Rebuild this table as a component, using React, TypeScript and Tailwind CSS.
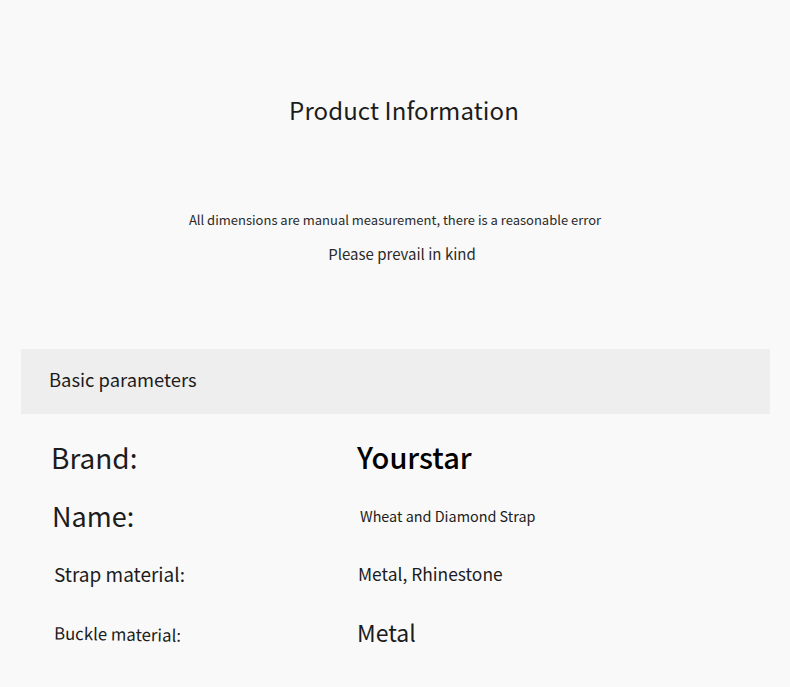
const font = { fontFamily: '"Noto Sans CJK SC", "Noto Sans", sans-serif' };

const rows = [
  { label: "Brand:", value: "Yourstar", h: "h-[60px]", lc: "text-[28px] pl-[30px]", vc: "text-[29px] font-medium text-black" },
  { label: "Name:", value: "Wheat and Diamond Strap", h: "h-[58px]", lc: "text-[27px] pl-[31px]", vc: "text-[14.4px] pl-[3px]" },
  { label: "Strap material:", value: "Metal, Rhinestone", h: "h-[58px]", lc: "text-[19px] pl-[33px]", vc: "text-[17.4px] pl-[1px]" },
  { label: "Buckle material:", value: "Metal", h: "h-[59px]", lc: "text-[16.8px] pl-[33px] origin-left rotate-[1deg]", vc: "text-[23px]" },
];

export default function App() {
  return (
    <div className="min-h-[687px] w-[790px] bg-[#f9f9f9] text-[#1c1c1c]" style={font}>
      <div className="pl-[18px] pt-[92px] text-center text-[24px] leading-[36px] tracking-[0.1px]">Product Information</div>
      <div className="pt-[82px] text-center text-[13px] leading-[20px] text-[#2a2a2a]">
        All dimensions are manual measurement, there is a reasonable error
      </div>
      <div className="pl-[14px] pt-[13px] text-center text-[15px] leading-[22px] text-[#2a2a2a]">Please prevail in kind</div>
      <div className="mx-[21px] mt-[84px] flex h-[65px] w-[749px] items-center bg-[#eeeeee] pb-[4px] pl-[28px] text-[18.4px]">
        Basic parameters
      </div>
      <div className="mx-[21px] pt-[13px]">
        {rows.map((r) => (
          <div key={r.label} className={`grid grid-cols-[336px_1fr] items-center ${r.h}`}>
            <div className={r.lc}>{r.label}</div>
            <div className={r.vc}>{r.value}</div>
          </div>
        ))}
      </div>
    </div>
  );
}
